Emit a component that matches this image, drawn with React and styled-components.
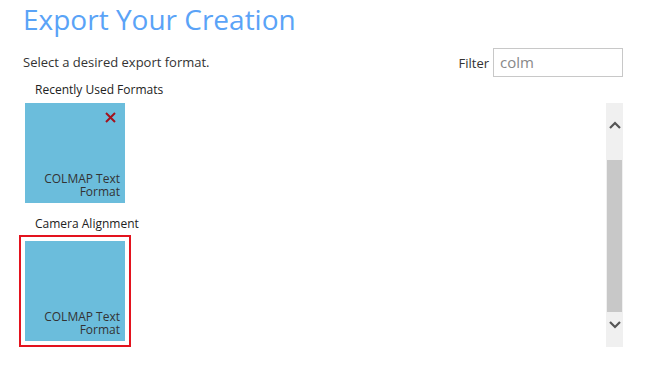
import React from 'react'
import styled, { createGlobalStyle } from 'styled-components'

const GlobalStyle = createGlobalStyle`
	html, body {
		margin: 0;
		padding: 0;
		background: #fff;
	}
	body {
		font-family: 'Open Sans', 'Liberation Sans', sans-serif;
		color: #333;
	}
`

const recent = [{ id: 'colmap-recent', name: 'COLMAP Text Format', removable: true }]
const camera = [{ id: 'colmap', name: 'COLMAP Text Format', selected: true }]

const Tile = ({ item }) => (
	<TileBody selected={item.selected}>
		{item.removable && (
			<Remove aria-label="Remove">
				<svg width="11" height="11" viewBox="0 0 11 11">
					<path d="M1 1 L10 10 M10 1 L1 10" stroke="#a3121e" strokeWidth="2" />
				</svg>
			</Remove>
		)}
		<TileName>{item.name}</TileName>
	</TileBody>
)

const App = () => {
	const [filter, setFilter] = React.useState('colm')
	return (
		<Page>
			<GlobalStyle />
			<Title>Export Your Creation</Title>
			<Toolbar>
				<Hint>Select a desired export format.</Hint>
				<FilterWrapper>
					<label htmlFor="filter">Filter</label>
					<input
						id="filter"
						value={filter}
						onChange={e => setFilter(e.target.value)}
					/>
				</FilterWrapper>
			</Toolbar>
			<Body>
				<List>
					<Section>
						<h4>Recently Used Formats</h4>
						<TileRow>
							{recent.map(item => (
								<Tile key={item.id} item={item} />
							))}
						</TileRow>
					</Section>
					<Section>
						<h4>Camera Alignment</h4>
						<TileRow>
							{camera.map(item => (
								<Tile key={item.id} item={item} />
							))}
						</TileRow>
					</Section>
				</List>
				<ScrollBar>
					<ScrollButton>
						<svg width="12" height="8" viewBox="0 0 12 8">
							<path d="M1 7 L6 2 L11 7" fill="none" stroke="#555" strokeWidth="2.2" />
						</svg>
					</ScrollButton>
					<Thumb />
					<ScrollButton>
						<svg width="12" height="8" viewBox="0 0 12 8">
							<path d="M1 1 L6 6 L11 1" fill="none" stroke="#555" strokeWidth="2.2" />
						</svg>
					</ScrollButton>
				</ScrollBar>
			</Body>
		</Page>
	)
}

export default App

const Page = styled.div`
	width: 653px;
	height: 386px;
	padding: 0 30px 0 23px;
	box-sizing: border-box;
`

const Title = styled.h1`
	margin: 0;
	padding-top: 1px;
	font-size: 28px;
	font-weight: 400;
	line-height: 36px;
	color: #5aa3f7;
`

const Toolbar = styled.div`
	display: flex;
	justify-content: space-between;
	align-items: flex-start;
	margin-top: 11px;
`

const Hint = styled.p`
	margin: 0;
	padding-top: 4px;
	font-size: 13px;
	line-height: 20px;
`

const FilterWrapper = styled.div`
	display: flex;
	align-items: center;
	gap: 4px;
	label {
		font-size: 13px;
		padding-top: 1px;
	}
	input {
		width: 130px;
		height: 29px;
		box-sizing: border-box;
		border: 1px solid #c8c8c8;
		padding: 0 6px 2px;
		font-family: inherit;
		font-size: 15px;
		color: #888;
		outline: none;
	}
`

const Body = styled.div`
	display: flex;
	margin-top: 1px;
`

const List = styled.div`
	flex: 1;
	display: flex;
	flex-direction: column;
	gap: 12px;
	padding-top: 3px;
`

const Section = styled.div`
	h4 {
		margin: 0 0 5px 12px;
		font-size: 12px;
		font-weight: 400;
		line-height: 17px;
		color: #222;
	}
`

const TileRow = styled.div`
	display: flex;
	gap: 8px;
	padding-left: 2px;
`

const TileBody = styled.div`
	position: relative;
	width: 100px;
	height: 100px;
	background: #6bbddc;
	display: flex;
	flex-direction: column;
	justify-content: flex-end;
	padding: 0 5px 5px 0;
	box-sizing: border-box;
	outline: ${props => (props.selected ? '2px solid #e3131e' : 'none')};
	outline-offset: 4px;
	margin-top: ${props => (props.selected ? '4px' : '0')};
`

const Remove = styled.span`
	position: absolute;
	top: 9px;
	right: 9px;
	display: flex;
`

const TileName = styled.span`
	font-size: 12px;
	line-height: 13px;
	text-align: right;
	color: #333;
	padding-left: 12px;
`

const ScrollBar = styled.div`
	width: 17px;
	margin-top: 25px;
	height: 244px;
	background: #f0f0f0;
	display: flex;
	flex-direction: column;
`

const ScrollButton = styled.div`
	display: flex;
	justify-content: center;
	box-sizing: border-box;
	&:first-child {
		height: 57px;
		padding-top: 18px;
	}
	&:last-child {
		height: 35px;
		padding-top: 9px;
	}
`

const Thumb = styled.div`
	flex: 1;
	margin: 0 1px;
	background: #c8c8c8;
`
